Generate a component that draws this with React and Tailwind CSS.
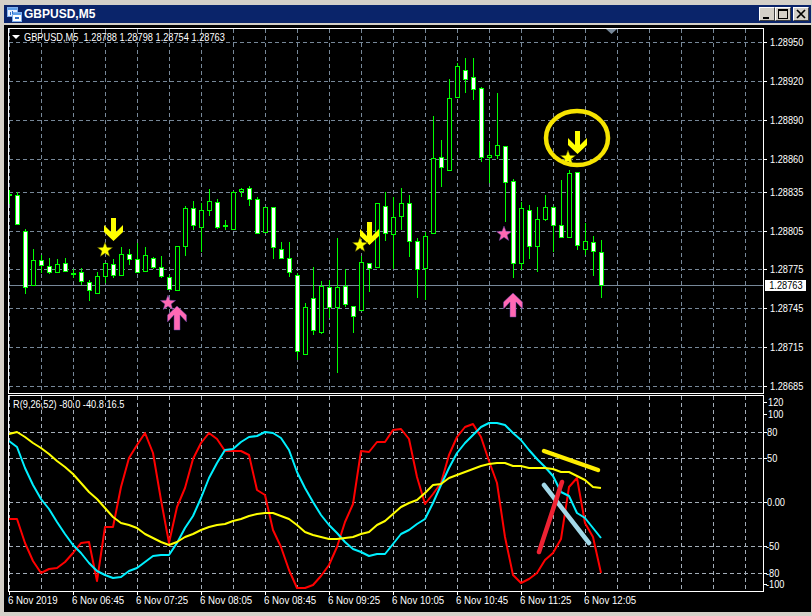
import React from 'react';

// [x, high, bodyTop, bodyBottom, low, filled]
const candles = [
  [9, 190, 194, 195, 204, 0], [17, 192, 195, 224, 224, 1], [25, 229, 231, 287, 294, 1], [33, 249, 260, 285, 285, 0],
  [41, 255, 260, 265, 273, 1], [49, 258, 266, 272, 274, 1], [57, 259, 264, 272, 273, 0], [65, 258, 263, 271, 272, 1],
  [73, 269, 273, 274, 278, 0], [81, 268, 272, 281, 285, 1], [89, 280, 282, 290, 301, 1], [97, 272, 276, 293, 293, 0],
  [105, 263, 263, 276, 283, 0], [113, 259, 264, 275, 278, 1], [121, 247, 254, 275, 275, 0], [129, 249, 254, 259, 265, 1],
  [137, 243, 259, 272, 272, 1], [145, 247, 255, 271, 271, 0], [153, 257, 258, 267, 269, 1], [161, 256, 267, 276, 278, 1],
  [169, 275, 277, 289, 289, 1], [177, 246, 246, 290, 290, 0], [185, 206, 208, 246, 256, 0], [193, 201, 208, 225, 230, 1],
  [201, 203, 210, 227, 252, 0], [209, 189, 201, 210, 216, 0], [217, 199, 202, 227, 229, 1], [225, 220, 225, 226, 230, 0],
  [233, 191, 192, 229, 230, 0], [241, 188, 189, 191, 197, 0], [249, 186, 188, 199, 206, 1], [257, 197, 199, 233, 234, 1],
  [265, 207, 207, 232, 233, 0], [273, 207, 207, 247, 259, 1], [281, 242, 249, 258, 258, 1], [289, 242, 258, 272, 277, 1],
  [297, 273, 275, 351, 360, 1], [305, 303, 307, 354, 355, 0], [313, 267, 298, 330, 335, 1], [321, 281, 286, 332, 334, 0],
  [329, 280, 287, 307, 318, 1], [337, 238, 287, 307, 373, 0], [345, 269, 286, 304, 307, 1], [353, 306, 306, 316, 333, 1],
  [361, 256, 262, 310, 310, 0], [369, 263, 263, 268, 292, 1], [377, 203, 203, 267, 267, 0], [385, 192, 206, 233, 241, 1],
  [393, 197, 217, 234, 269, 0], [401, 188, 203, 216, 230, 0], [409, 195, 203, 241, 257, 1], [417, 238, 241, 269, 298, 1],
  [425, 232, 236, 268, 300, 0], [433, 116, 158, 233, 233, 0], [441, 140, 157, 167, 187, 1], [449, 79, 98, 170, 170, 0],
  [457, 63, 66, 97, 98, 0], [465, 58, 70, 79, 93, 1], [473, 58, 77, 89, 100, 1], [481, 87, 88, 157, 162, 1],
  [489, 142, 155, 157, 183, 0], [497, 93, 145, 155, 159, 0], [505, 146, 146, 182, 222, 1], [513, 179, 181, 263, 278, 1],
  [521, 202, 208, 263, 270, 0], [529, 205, 210, 246, 259, 1], [537, 207, 219, 246, 272, 0], [545, 195, 207, 219, 221, 0],
  [553, 206, 207, 225, 252, 1], [561, 180, 225, 237, 237, 1], [569, 170, 173, 237, 237, 0], [577, 172, 172, 245, 250, 1],
  [585, 223, 241, 249, 255, 0], [593, 236, 242, 251, 276, 1], [601, 240, 252, 285, 298, 1],
];

// indicator values, one per bar, starting at x = 9
const redLine = [519, 519, 543, 561, 573, 569, 568, 562, 553, 543, 542, 581, 527, 527, 487, 458, 445, 433, 453, 500, 543, 507, 488, 459, 443, 433, 439, 451, 451, 451, 455, 490, 495, 530, 547, 570, 588, 588, 585, 576, 565, 547, 522, 504, 451, 452, 442, 442, 430, 429, 439, 477, 504, 494, 483, 455, 437, 427, 424, 437, 461, 483, 537, 575, 583, 579, 573, 560, 553, 539, 487, 478, 523, 537, 573];
const cyanLine = [441, 447, 468, 485, 499, 509, 522, 534, 545, 553, 563, 571, 575, 578, 577, 571, 568, 562, 556, 555, 555, 543, 528, 516, 498, 478, 463, 450, 449, 442, 437, 436, 432, 433, 438, 450, 472, 488, 502, 515, 525, 533, 542, 549, 552, 556, 554, 554, 544, 534, 530, 524, 519, 503, 485, 468, 453, 443, 435, 427, 423, 423, 425, 433, 440, 450, 459, 467, 476, 492, 496, 513, 518, 528, 538];
const yellowLine = [434, 432, 437, 443, 448, 454, 461, 467, 474, 483, 492, 499, 508, 517, 523, 525, 528, 534, 538, 542, 545, 542, 537, 534, 530, 527, 525, 524, 521, 519, 516, 514, 513, 513, 516, 519, 525, 532, 535, 537, 539, 539, 538, 537, 534, 532, 525, 521, 514, 507, 503, 500, 493, 485, 484, 478, 475, 472, 469, 466, 464, 463, 463, 466, 466, 468, 468, 468, 469, 472, 472, 476, 480, 487, 488];

const toPoints = (values) => values.map((y, i) => `${9 + i * 8},${y}`).join(' ');

const priceLabels = [
  ['1.28950', 42], ['1.28920', 81], ['1.28890', 120], ['1.28860', 159], ['1.28835', 192],
  ['1.28805', 231], ['1.28775', 269], ['1.28745', 308], ['1.28715', 347], ['1.28685', 386],
];
const indicatorLabels = [
  ['120', 402, 768], ['100', 414, 768], ['80', 432, 767], ['50', 458, 767], ['0.00', 502, 767],
  ['-50', 546, 766], ['-80', 573, 766], ['-100', 584, 766],
];
const timeLabels = ['6 Nov 2019', '6 Nov 06:45', '6 Nov 07:25', '6 Nov 08:05', '6 Nov 08:45', '6 Nov 09:25', '6 Nov 10:05', '6 Nov 10:45', '6 Nov 11:25', '6 Nov 12:05'];

const gridX = Array.from({ length: 24 }, (_, i) => 9 + i * 32);

const starPoints = (cx, cy, r) => {
  const pts = [];
  for (let i = 0; i < 10; i++) {
    const rad = i % 2 === 0 ? r : r * 0.42;
    const a = -Math.PI / 2 + (i * Math.PI) / 5;
    pts.push(`${cx + rad * Math.cos(a)},${cy + rad * Math.sin(a)}`);
  }
  return pts.join(' ');
};

const DownArrow = ({ x, y }) => (
  <polygon
    points={`${x - 2.5},${y} ${x + 2.5},${y} ${x + 2.5},${y + 14} ${x + 9.5},${y + 7} ${x + 9.5},${y + 14} ${x},${y + 23} ${x - 9.5},${y + 14} ${x - 9.5},${y + 7} ${x - 2.5},${y + 14}`}
    fill="#ffff00"
  />
);

const UpArrow = ({ x, y }) => (
  <polygon
    points={`${x},${y} ${x + 9.5},${y + 9} ${x + 9.5},${y + 16} ${x + 3},${y + 9} ${x + 3},${y + 24} ${x - 3},${y + 24} ${x - 3},${y + 9} ${x - 9.5},${y + 16} ${x - 9.5},${y + 9}`}
    fill="#ff69b4"
    stroke="#5a3fa0"
    strokeWidth="0.5"
  />
);

const Grid = ({ rows, top, bottom, color }) => (
  <g stroke={color} strokeWidth="1" strokeDasharray="4 3" shapeRendering="crispEdges">
    {gridX.map((x) => (
      <line key={x} x1={x + 0.5} y1={top} x2={x + 0.5} y2={bottom} />
    ))}
    {rows.map((y) => (
      <line key={y} x1="9" y1={y + 0.5} x2="763" y2={y + 0.5} />
    ))}
  </g>
);

const Candles = () => (
  <g shapeRendering="crispEdges">
    {candles.map(([x, high, top, bottom, low, filled]) => (
      <g key={x}>
        <line x1={x + 0.5} y1={high} x2={x + 0.5} y2={low} stroke="#00ff00" />
        <rect x={x - 1.5} y={top + 0.5} width="4" height={bottom - top} fill={filled ? '#ffffff' : '#000000'} stroke="#00ff00" />
      </g>
    ))}
  </g>
);

const AxisTick = ({ y }) => <div className="absolute left-0 w-[3px] h-px bg-white" style={{ top: y }} />;

const AxisLabel = ({ text, y, x = 770 }) => (
  <span className="absolute text-white leading-none whitespace-nowrap origin-left scale-x-[0.84]" style={{ top: y - 5, left: x - 764 }}>
    {text}
  </span>
);

const WindowIcon = () => (
  <svg width="15" height="15" viewBox="0 0 15 15" shapeRendering="crispEdges">
    <rect x="0.5" y="0.5" width="10" height="9" fill="#e8f0ff" stroke="#7fb0f0" />
    <rect x="1" y="1" width="9" height="2" fill="#5f9fe8" />
    <rect x="5.5" y="5.5" width="9" height="9" fill="#ffffff" stroke="#7fb0f0" />
    <rect x="6" y="6" width="8" height="2" fill="#5f9fe8" />
    <path d="M3 5v3M5 4v3M8 10l1 2 1-2 1 2 1-2" stroke="#2f6fc8" fill="none" />
  </svg>
);

const TitleButton = ({ children, className = '' }) => (
  <div className={`w-4 h-[14px] bg-[#d4d0c8] border-t border-l border-white border-r border-b border-r-[#404040] border-b-[#404040] flex items-center justify-center ${className}`}>
    {children}
  </div>
);

export default function App() {
  return (
    <div className="w-[812px] h-[616px] bg-[#d4d0c8] pt-[5px] pl-1 pr-px pb-1 flex flex-col font-['Liberation_Sans',sans-serif] overflow-hidden">
      {/* Title bar */}
      <div className="h-[18px] bg-[#0a246a] flex items-center pl-[3px] pr-[2px] shrink-0">
        <WindowIcon />
        <span className="ml-[2px] text-white font-bold text-[12px] leading-none">GBPUSD,M5</span>
        <div className="ml-auto flex items-center">
          <TitleButton>
            <svg width="12" height="10" viewBox="0 0 12 10" shapeRendering="crispEdges"><rect x="2" y="8" width="6" height="2" fill="#000" /></svg>
          </TitleButton>
          <TitleButton>
            <svg width="12" height="10" viewBox="0 0 12 10" shapeRendering="crispEdges"><path d="M1.5 1.5h9v8h-9z" fill="none" stroke="#000" /><rect x="1" y="0" width="10" height="2" fill="#000" /></svg>
          </TitleButton>
          <TitleButton className="ml-[2px]">
            <svg width="12" height="10" viewBox="0 0 12 10"><path d="M2 1l8 8M10 1l-8 8" stroke="#000" strokeWidth="1.7" fill="none" /></svg>
          </TitleButton>
        </div>
      </div>

      {/* Chart window */}
      <div className="mt-[2px] flex-1 bg-black pt-[3px] pl-1 flex flex-col text-[11px]">
        {/* Price pane */}
        <div className="flex h-[366px]">
          <div className="relative w-[756px] border border-white shrink-0">
            <svg width="754" height="364" viewBox="9 29 754 364" className="block">
              <Grid rows={priceLabels.map((p) => p[1])} top={29} bottom={393} color="#778899" />
              <line x1="9" y1="285.5" x2="763" y2="285.5" stroke="#778899" shapeRendering="crispEdges" />
              <Candles />
              <DownArrow x={113.5} y={218} />
              <DownArrow x={369.5} y={222} />
              <DownArrow x={577.5} y={131} />
              <UpArrow x={177} y={306} />
              <UpArrow x={513} y={293} />
              <polygon points={starPoints(105, 250, 8)} fill="#ffff00" stroke="#3a3a00" strokeWidth="0.5" />
              <polygon points={starPoints(360, 245, 8)} fill="#ffff00" stroke="#3a3a00" strokeWidth="0.5" />
              <polygon points={starPoints(568, 158, 8)} fill="#ffff00" stroke="#3a3a00" strokeWidth="0.5" />
              <polygon points={starPoints(168, 303, 8)} fill="#ff69b4" stroke="#5a3fa0" strokeWidth="0.5" />
              <polygon points={starPoints(504, 234, 8)} fill="#ff69b4" stroke="#5a3fa0" strokeWidth="0.5" />
              <ellipse cx="577" cy="138" rx="31" ry="27" fill="none" stroke="#f7e400" strokeWidth="4.5" />
              <polygon points="606,29 617,29 611.5,34" fill="#778899" />
            </svg>
            <div className="absolute left-[3px] top-0 flex items-center text-white leading-none h-4">
              <svg width="8" height="4" viewBox="0 0 8 4" className="mr-[4px]"><polygon points="0,0 8,0 4,4" fill="#fff" /></svg>
              <span className="origin-left scale-x-[0.84] whitespace-nowrap">GBPUSD,M5&nbsp; 1.28788 1.28798 1.28754 1.28763</span>
            </div>
          </div>
          <div className="relative flex-1 -translate-y-7">
            {priceLabels.map(([text, y]) => (
              <React.Fragment key={text}>
                <AxisTick y={y} />
                <AxisLabel text={text} y={y} />
              </React.Fragment>
            ))}
            <div className="absolute left-px w-[41px] h-[11px] bg-white text-black flex items-center justify-center leading-none" style={{ top: 280 }}>
              <span className="scale-x-[0.84]">1.28763</span>
            </div>
          </div>
        </div>

        {/* Indicator pane */}
        <div className="flex h-[197px] mt-px">
          <div className="relative w-[756px] border border-white shrink-0">
            <svg width="754" height="195" viewBox="9 396 754 195" className="block">
              <Grid rows={[432, 458, 502, 546, 573]} top={396} bottom={591} color="#a3adb8" />
              <g fill="none" strokeWidth="2" strokeLinejoin="round">
                <polyline points={toPoints(redLine)} stroke="#ff0000" />
                <polyline points={toPoints(cyanLine)} stroke="#00f0ff" />
                <polyline points={toPoints(yellowLine)} stroke="#ffff00" />
              </g>
              <g strokeWidth="4.5" strokeLinecap="round">
                <line x1="544" y1="451" x2="598" y2="470" stroke="#ffee00" />
                <line x1="544" y1="485" x2="589" y2="543" stroke="#a3d8e8" />
                <line x1="539" y1="552" x2="562" y2="482" stroke="#ee2233" />
              </g>
            </svg>
            <span className="absolute left-1 top-[3px] text-white leading-none origin-left scale-x-[0.84] whitespace-nowrap">R(9,26,52) -80.0 -40.8 16.5</span>
          </div>
          <div className="relative flex-1 -translate-y-[395px]">
            {indicatorLabels.map(([text, y, x]) => (
              <React.Fragment key={text}>
                <AxisTick y={y} />
                <AxisLabel text={text} y={y} x={x} />
              </React.Fragment>
            ))}
          </div>
        </div>

        {/* Time axis */}
        <div className="flex h-5 text-white leading-none">
          {timeLabels.map((label) => (
            <div key={label} className="relative w-16 shrink-0 pt-[3px]">
              <div className="absolute left-px top-0 w-px h-[3px] bg-white" />
              <span className="block origin-left scale-x-[0.88] whitespace-nowrap">{label}</span>
            </div>
          ))}
        </div>
      </div>
    </div>
  );
}
